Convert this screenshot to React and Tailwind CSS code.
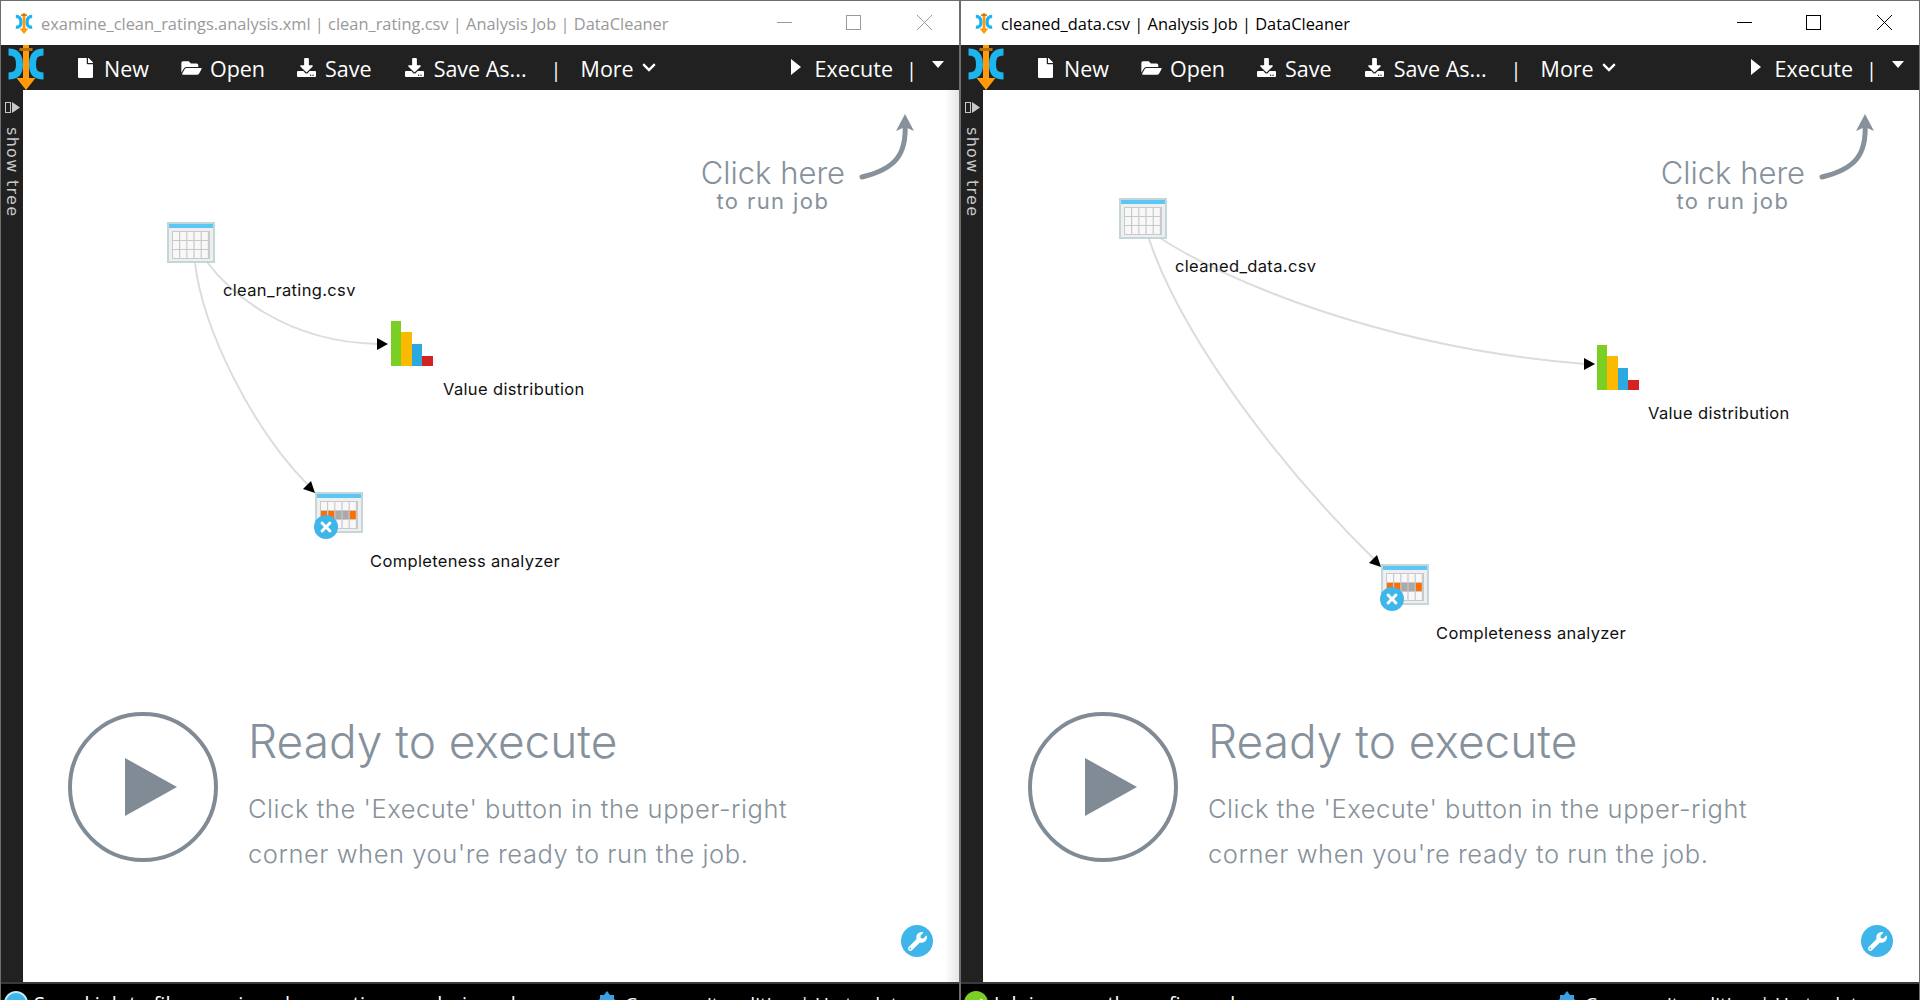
import React from "react";
import { FaFile, FaFolderOpen, FaDownload, FaChevronDown, FaWrench, FaTimes, FaCheck } from "react-icons/fa";

const LABEL = "font-['Inter','Lato',sans-serif]";

function Logo({ className }) {
    return (
        <svg viewBox="0 0 35 45" className={className} fill="none">
            <path d="M0 7C8 7 11 11 11 20C11 27 8 31 0 31" stroke="#1cb5f0" strokeWidth="7" />
            <path d="M35 7C27 7 24 11 24 20C24 27 27 31 35 31" stroke="#1cb5f0" strokeWidth="7" />
            <rect x="14.500" y="0" width="6" height="35" fill="#ff9a0d" />
            <rect x="11" y="3" width="13" height="3" fill="#b96f10" />
            <path d="M8 33h19L17.500 45z" fill="#ff9a0d" />
        </svg>
    );
}

function TableIcon({ highlight }) {
    const cells = [];
    for (let r = 0; r < 3; r++) {
        for (let c = 0; c < 5; c++) {
            let fill = "#f8f8f8";
            if (highlight && r === 1) fill = c === 2 || c === 3 ? "#a9a9a9" : "#ff6f00";
            cells.push(<rect key={r + "-" + c} x={6 + c * 7.2} y={10 + r * 9} width="6" height="8" fill={fill} />);
        }
    }
    return (
        <svg viewBox="0 0 48 41" className="w-[48px] h-[41px]">
            <rect x="0" y="0" width="48" height="41" fill="#c3d6da" />
            <rect x="2" y="2" width="44" height="37" fill="#efefef" />
            <rect x="2" y="2" width="44" height="4" fill="#5cc6f5" />
            <rect x="5" y="9" width="38" height="28" fill="#c9c9c9" />
            {cells}
        </svg>
    );
}

function BarsIcon() {
    return (
        <div className="flex items-end w-[42px] h-[45px]">
            <div className="w-[10px] h-[45px] bg-[#7bcf24]" />
            <div className="w-[11px] h-[34px] bg-[#fbb900]" />
            <div className="w-[10px] h-[22px] bg-[#2ca9de]" />
            <div className="w-[11px] h-[10px] bg-[#d42222]" />
        </div>
    );
}

function ToolItem({ icon, label, className }) {
    return (
        <div className={"flex items-center " + className}>
            {icon}
            <span>{label}</span>
        </div>
    );
}

function Window({ title, muted, edges, nodes, statusIcon, status }) {
    const ctrl = muted ? "#9a9a9a" : "#000000";
    return (
        <div className="relative w-[960px] h-[1000px] flex flex-col overflow-hidden border-x border-t border-[#6d6d6d] bg-white">
            {/* Title bar */}
            <div className="h-[44px] flex items-center shrink-0 bg-white font-['Open_Sans',sans-serif]">
                <Logo className="ml-[14px] w-[18px] h-[21px]" />
                <span className={"ml-[8px] mt-[2px] text-[16.400px] " + (muted ? "text-[#999999]" : "text-black")}>{title}</span>
                <svg viewBox="0 0 160 20" className="absolute right-[23px] top-[11px] w-[160px] h-[20px]" fill="none" stroke={ctrl} strokeWidth="1">
                    <path d="M1 10.500h15" />
                    <rect x="70.500" y="3.500" width="14" height="14" />
                    <path d="M141 3l15 15M156 3l-15 15" />
                </svg>
            </div>

            {/* Toolbar */}
            <div className="h-[45px] shrink-0 flex items-center bg-[#212121] text-white text-[21.500px] font-['Open_Sans',sans-serif]">
                <Logo className="ml-[7px] w-[36px] h-[45px]" />
                <ToolItem className="ml-[33px] gap-[10px] [&>span]:translate-y-[2px]" icon={<FaFile className="w-[17px] h-[20px]" />} label="New" />
                <ToolItem className="ml-[32px] gap-[8px] [&>span]:translate-y-[2px]" icon={<FaFolderOpen className="w-[21px] h-[18px]" />} label="Open" />
                <ToolItem className="ml-[31px] gap-[8px] [&>span]:translate-y-[2px]" icon={<FaDownload className="w-[21px] h-[19px]" />} label="Save" />
                <ToolItem className="ml-[32px] gap-[9px] [&>span]:translate-y-[2px]" icon={<FaDownload className="w-[21px] h-[19px]" />} label="Save As..." />
                <span className="ml-[24px] translate-y-[2px] text-[20px]">|</span>
                <span className="ml-[19px] translate-y-[2px]">More</span>
                <FaChevronDown className="ml-[5px] w-[20px] h-[15px]" />
                <div className="ml-auto flex items-center">
                    <svg viewBox="0 0 10 16" className="w-[10px] h-[18px] -translate-y-[1px]"><path d="M0 0l10 8-10 8z" fill="#fff" /></svg>
                    <span className="ml-[14px] translate-y-[2px]">Execute</span>
                    <span className="ml-[13px] translate-y-[2px] text-[20px]">|</span>
                    <svg viewBox="0 0 12 7" className="ml-[15px] mr-[15px] w-[12px] h-[7px] -translate-y-[3px]"><path d="M0 0h12L6 7z" fill="#fff" /></svg>
                </div>
            </div>

            <div className="flex-1 flex min-h-0">
                {/* Show tree strip */}
                <div className="w-[22px] shrink-0 bg-[#212121] flex flex-col items-center pt-[12px] text-[#c8c8c8]">
                    <svg viewBox="0 0 15 11" className="w-[15px] h-[11px]">
                        <rect x="0.500" y="0.500" width="5" height="10" fill="none" stroke="#c8c8c8" />
                        <path d="M7 0l8 5.500-8 5.500z" fill="#c8c8c8" />
                    </svg>
                    <span className="mt-[14px] text-[16px] leading-none tracking-[1.300px] [writing-mode:vertical-rl] font-['DejaVu_Sans',sans-serif]">show tree</span>
                </div>

                {/* Job canvas */}
                <div className="relative flex-1 flex flex-col bg-white text-[#86919b]">
                    <div className="flex justify-end pt-[66px] pr-[27px]">
                        <div className={"flex flex-col items-center mr-[87px] " + LABEL}>
                            <span className="text-[31px] leading-[34px] font-light">Click here</span>
                            <span className="text-[22px] leading-[22px] tracking-[1.400px]">to run job</span>
                        </div>
                    </div>
                    <svg viewBox="0 0 60 80" className="absolute left-[834px] top-[21px] w-[60px] h-[80px]" fill="none">
                        <path d="M5 66C38 58 50 44 48 12" stroke="#86919b" strokeWidth="5" strokeLinecap="round" />
                        <path d="M48 3l9 17-9-4-9 4z" fill="#86919b" />
                    </svg>

                    {/* Diagram */}
                    <svg className="absolute left-0 top-0 w-full h-full pointer-events-none" viewBox="0 0 936 910" preserveAspectRatio="none" fill="none">
                        {edges.map((e) => (
                            <g key={e.d}>
                                <path d={e.d} stroke="#dcdcdc" strokeWidth="2" />
                                <path d={e.arrow} fill="#000" />
                            </g>
                        ))}
                    </svg>
                    {nodes.map((n) => (
                        <div key={n.label}>
                            <div className="absolute" style={{ left: n.x, top: n.y }}>
                                {n.type === "bars" ? <BarsIcon /> : <TableIcon highlight={n.type === "completeness"} />}
                                {n.type === "completeness" && (
                                    <div className="absolute left-[-1px] top-[23px] w-[24px] h-[24px] rounded-full bg-[#3fb6ea] flex items-center justify-center text-white">
                                        <FaTimes className="w-[16px] h-[16px]" />
                                    </div>
                                )}
                            </div>
                            <span className={"absolute text-[16.500px] tracking-[0.350px] text-[#111] whitespace-nowrap " + LABEL} style={{ left: n.lx, top: n.ly }}>{n.label}</span>
                        </div>
                    ))}

                    {/* Ready panel */}
                    <div className="mt-auto mb-[124px] ml-[45px] flex items-start">
                        <svg viewBox="0 0 150 150" className="w-[150px] h-[150px] shrink-0">
                            <circle cx="75" cy="75" r="73" fill="none" stroke="#808b95" strokeWidth="4" />
                            <path d="M57 46l52 29-52 29z" fill="#808b95" />
                        </svg>
                        <div className={"ml-[30px] pt-[2px] " + LABEL}>
                            <h2 className="text-[46px] leading-[54px] font-light">Ready to execute</h2>
                            <p className="mt-[18px] text-[25.500px] leading-[45px] font-light tracking-[0.550px]">
                                Click the 'Execute' button in the upper-right<br />
                                corner when you're ready to run the job.
                            </p>
                        </div>
                    </div>

                    {/* Settings wrench */}
                    <div className="absolute left-[878px] top-[835px] w-[32px] h-[32px] rounded-full bg-[#3fb6ea] flex items-center justify-center text-white">
                        <FaWrench className="w-[19px] h-[19px]" />
                    </div>

                    {/* Shadow the other window throws on this one */}
                    {muted && <div className="absolute right-0 top-0 bottom-0 w-[14px] bg-gradient-to-r from-transparent to-black/10" />}
                </div>
            </div>

            {/* Status bar */}
            <div className="absolute left-0 right-0 top-[981px] h-[19px] border-t-2 border-[#3a3a3a] bg-black text-white text-[20px] leading-[22px] font-['Open_Sans',sans-serif]">
                <div className="flex items-start pt-[7px] pl-[3px] whitespace-nowrap">
                    {statusIcon}
                    <span className="ml-[6px] w-[563px] translate-y-[2px]">{status}</span>
                    <svg viewBox="0 0 20 20" className="w-[20px] h-[20px] mr-[8px]"><path d="M10 0l3 4h4v4l3 2-3 2v4h-4l-3 3-3-3H3v-4l-3-2 3-2V4h4z" fill="#3aa0e0" /></svg>
                    <span className="translate-y-[2px] text-[19px]">Community edition | Up to date</span>
                </div>
            </div>
        </div>
    );
}

function App() {
    return (
        <div className="flex w-[1920px] h-[1000px] overflow-hidden bg-white">
            <Window
                muted
                title="examine_clean_ratings.analysis.xml | clean_rating.csv | Analysis Job | DataCleaner"
                edges={[
                    { d: "M184 172C205 200 260 252 355 254", arrow: "M365 254l-11-6v12z" },
                    { d: "M172 173C180 240 230 340 286 396", arrow: "M292 403l-4-12-8 8z" },
                ]}
                nodes={[
                    { type: "table", label: "clean_rating.csv", x: 144, y: 132, lx: 200, ly: 188 },
                    { type: "bars", label: "Value distribution", x: 368, y: 231, lx: 420, ly: 287 },
                    { type: "completeness", label: "Completeness analyzer", x: 292, y: 402, lx: 347, ly: 459 },
                ]}
                statusIcon={
                    <div className="w-[24px] h-[24px] rounded-full bg-[#3fb6ea] border-2 border-[#bfe8fa] shrink-0" />
                }
                status="Saved job to file examine_clean_ratings.analysis.xml"
            />
            <Window
                title="cleaned_data.csv | Analysis Job | DataCleaner"
                edges={[
                    { d: "M174 146C240 190 400 258 602 274", arrow: "M612 274l-11-6v12z" },
                    { d: "M166 149C200 250 300 380 392 470", arrow: "M398 477l-4-12-8 8z" },
                ]}
                nodes={[
                    { type: "table", label: "cleaned_data.csv", x: 136, y: 108, lx: 192, ly: 164 },
                    { type: "bars", label: "Value distribution", x: 614, y: 255, lx: 665, ly: 311 },
                    { type: "completeness", label: "Completeness analyzer", x: 398, y: 474, lx: 453, ly: 531 },
                ]}
                statusIcon={
                    <div className="w-[24px] h-[24px] rounded-full bg-[#7bcf24] flex items-start justify-center text-white shrink-0">
                        <FaCheck className="w-[14px] h-[14px] mt-[6px]" />
                    </div>
                }
                status="Job is correctly configured"
            />
        </div>
    );
}

export default App;
